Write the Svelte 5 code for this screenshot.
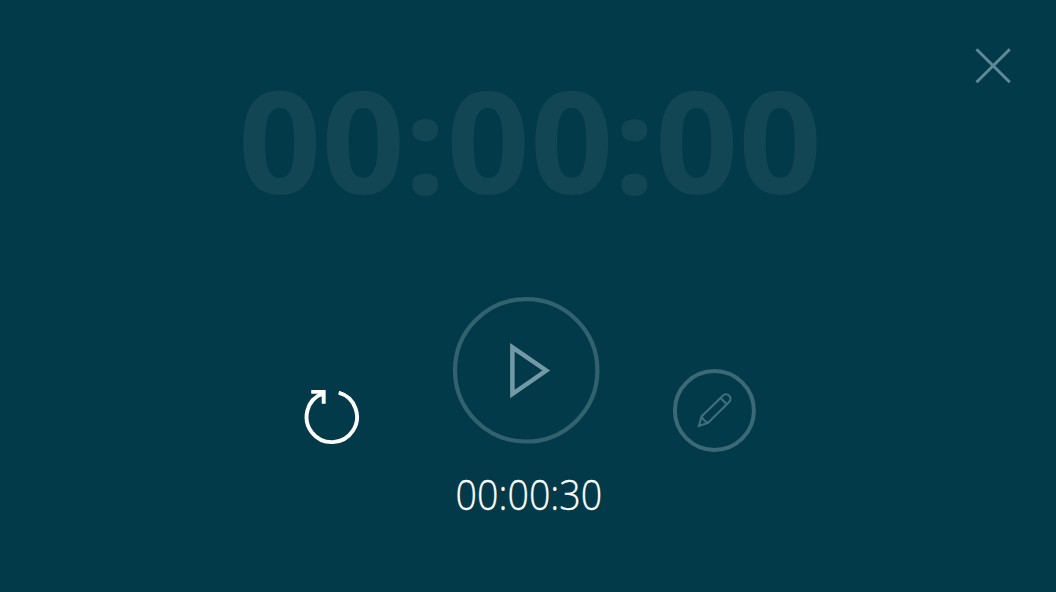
<script>
  let remaining = $state('00:00:00');
  let preset = $state('00:00:30');
  let parts = $derived(remaining.split(':'));
</script>

<main class="timer">
  <header>
    <button class="close" aria-label="Close">
      <svg width="36" height="36" viewBox="0 0 36 36"><path d="M1.5 1.2 34.8 34.2M34.8 1.2 1.5 34.2" /></svg>
    </button>
  </header>

  <div class="countdown">{#each parts as part, i}{#if i > 0}<span class="colon">:</span>{/if}<span>{part}</span>{/each}</div>

  <div class="controls">
    <button class="reset" aria-label="Reset">
      <svg width="56" height="56" viewBox="0 0 56 56">
        <path d="M34.7 3.7A25.2 25.2 0 1 1 18.8 4.4" />
        <path d="M7.2 2.9H19.7V14.8" />
        <path class="corner" d="M14 4H19V9Z" />
      </svg>
    </button>
    <button class="play" aria-label="Start">
      <svg width="148" height="148" viewBox="0 0 148 148">
        <circle cx="74.2" cy="74.3" r="71.2" />
        <path d="M60.4 51.3V98L94.2 74.5Z" />
      </svg>
    </button>
    <button class="edit" aria-label="Edit">
      <svg width="84" height="84" viewBox="0 0 84 84">
        <circle cx="42.4" cy="41.5" r="39.5" />
        <path d="M27 56.9 29.6 47.4 50.8 26.7C52.8 24.8 55.5 25 57.2 26.7C58.9 28.5 58.9 31.1 57.1 32.9L36.1 53.8ZM29.6 47.4C31.1 51.1 32.3 52.3 36.1 53.8M48.5 29.1 54.7 35.3" />
      </svg>
    </button>
  </div>

  <div class="preset"><span>{preset}</span></div>
</main>

<style>
  :global(body) {
    margin: 0;
    background: #023a49;
  }
  .timer {
    box-sizing: border-box;
    width: 1056px;
    height: 592px;
    display: flex;
    flex-direction: column;
    overflow: hidden;
    background: #023a49;
    font-family: "Open Sans", "Noto Sans", sans-serif;
    color: #fff;
  }
  header {
    display: flex;
    justify-content: flex-end;
    height: 36px;
    padding: 48px 45px 0 0;
  }
  button {
    display: block;
    padding: 0;
    border: 0;
    background: none;
  }
  svg {
    display: block;
    fill: none;
  }
  .close svg {
    stroke: #5f8996;
    stroke-width: 3;
  }
  .countdown {
    display: flex;
    justify-content: center;
    height: 212px;
    padding-left: 4px;
    font-size: 146.5px;
    font-weight: 700;
    line-height: 106px;
    color: #124655;
    transform: scale(0.996, 0.972);
    transform-origin: 50% 110px;
  }
  .colon {
    height: 106px;
    transform: scale(1.03, 0.94);
    transform-origin: 50% 110px;
  }
  .controls {
    display: grid;
    grid-template-columns: 56px 148px 84px;
    column-gap: 73px;
    height: 156px;
    margin-left: 304px;
    align-items: start;
  }
  .play {
    margin-left: 19px;
  }
  .reset {
    margin-top: 93px;
  }
  .edit {
    margin-top: 73px;
    margin-left: 18px;
  }
  .reset svg {
    stroke: #fff;
    stroke-width: 3.9;
  }
  .reset .corner {
    fill: #fff;
    stroke: none;
  }
  .play circle {
    stroke: #32616f;
    stroke-width: 4.2;
  }
  .play path {
    stroke: #7299a5;
    stroke-width: 4.5;
  }
  .edit circle {
    stroke: #3c6977;
    stroke-width: 4;
  }
  .edit path {
    stroke: #3f6e7c;
    stroke-width: 2.1;
  }
  .preset {
    display: flex;
    justify-content: center;
    padding: 14px 0 0 1px;
    font-size: 43px;
    font-weight: 300;
    line-height: 56px;
  }
  .preset span {
    transform: scaleX(0.874);
    -webkit-text-stroke: 0.3px #fff;
  }
</style>
